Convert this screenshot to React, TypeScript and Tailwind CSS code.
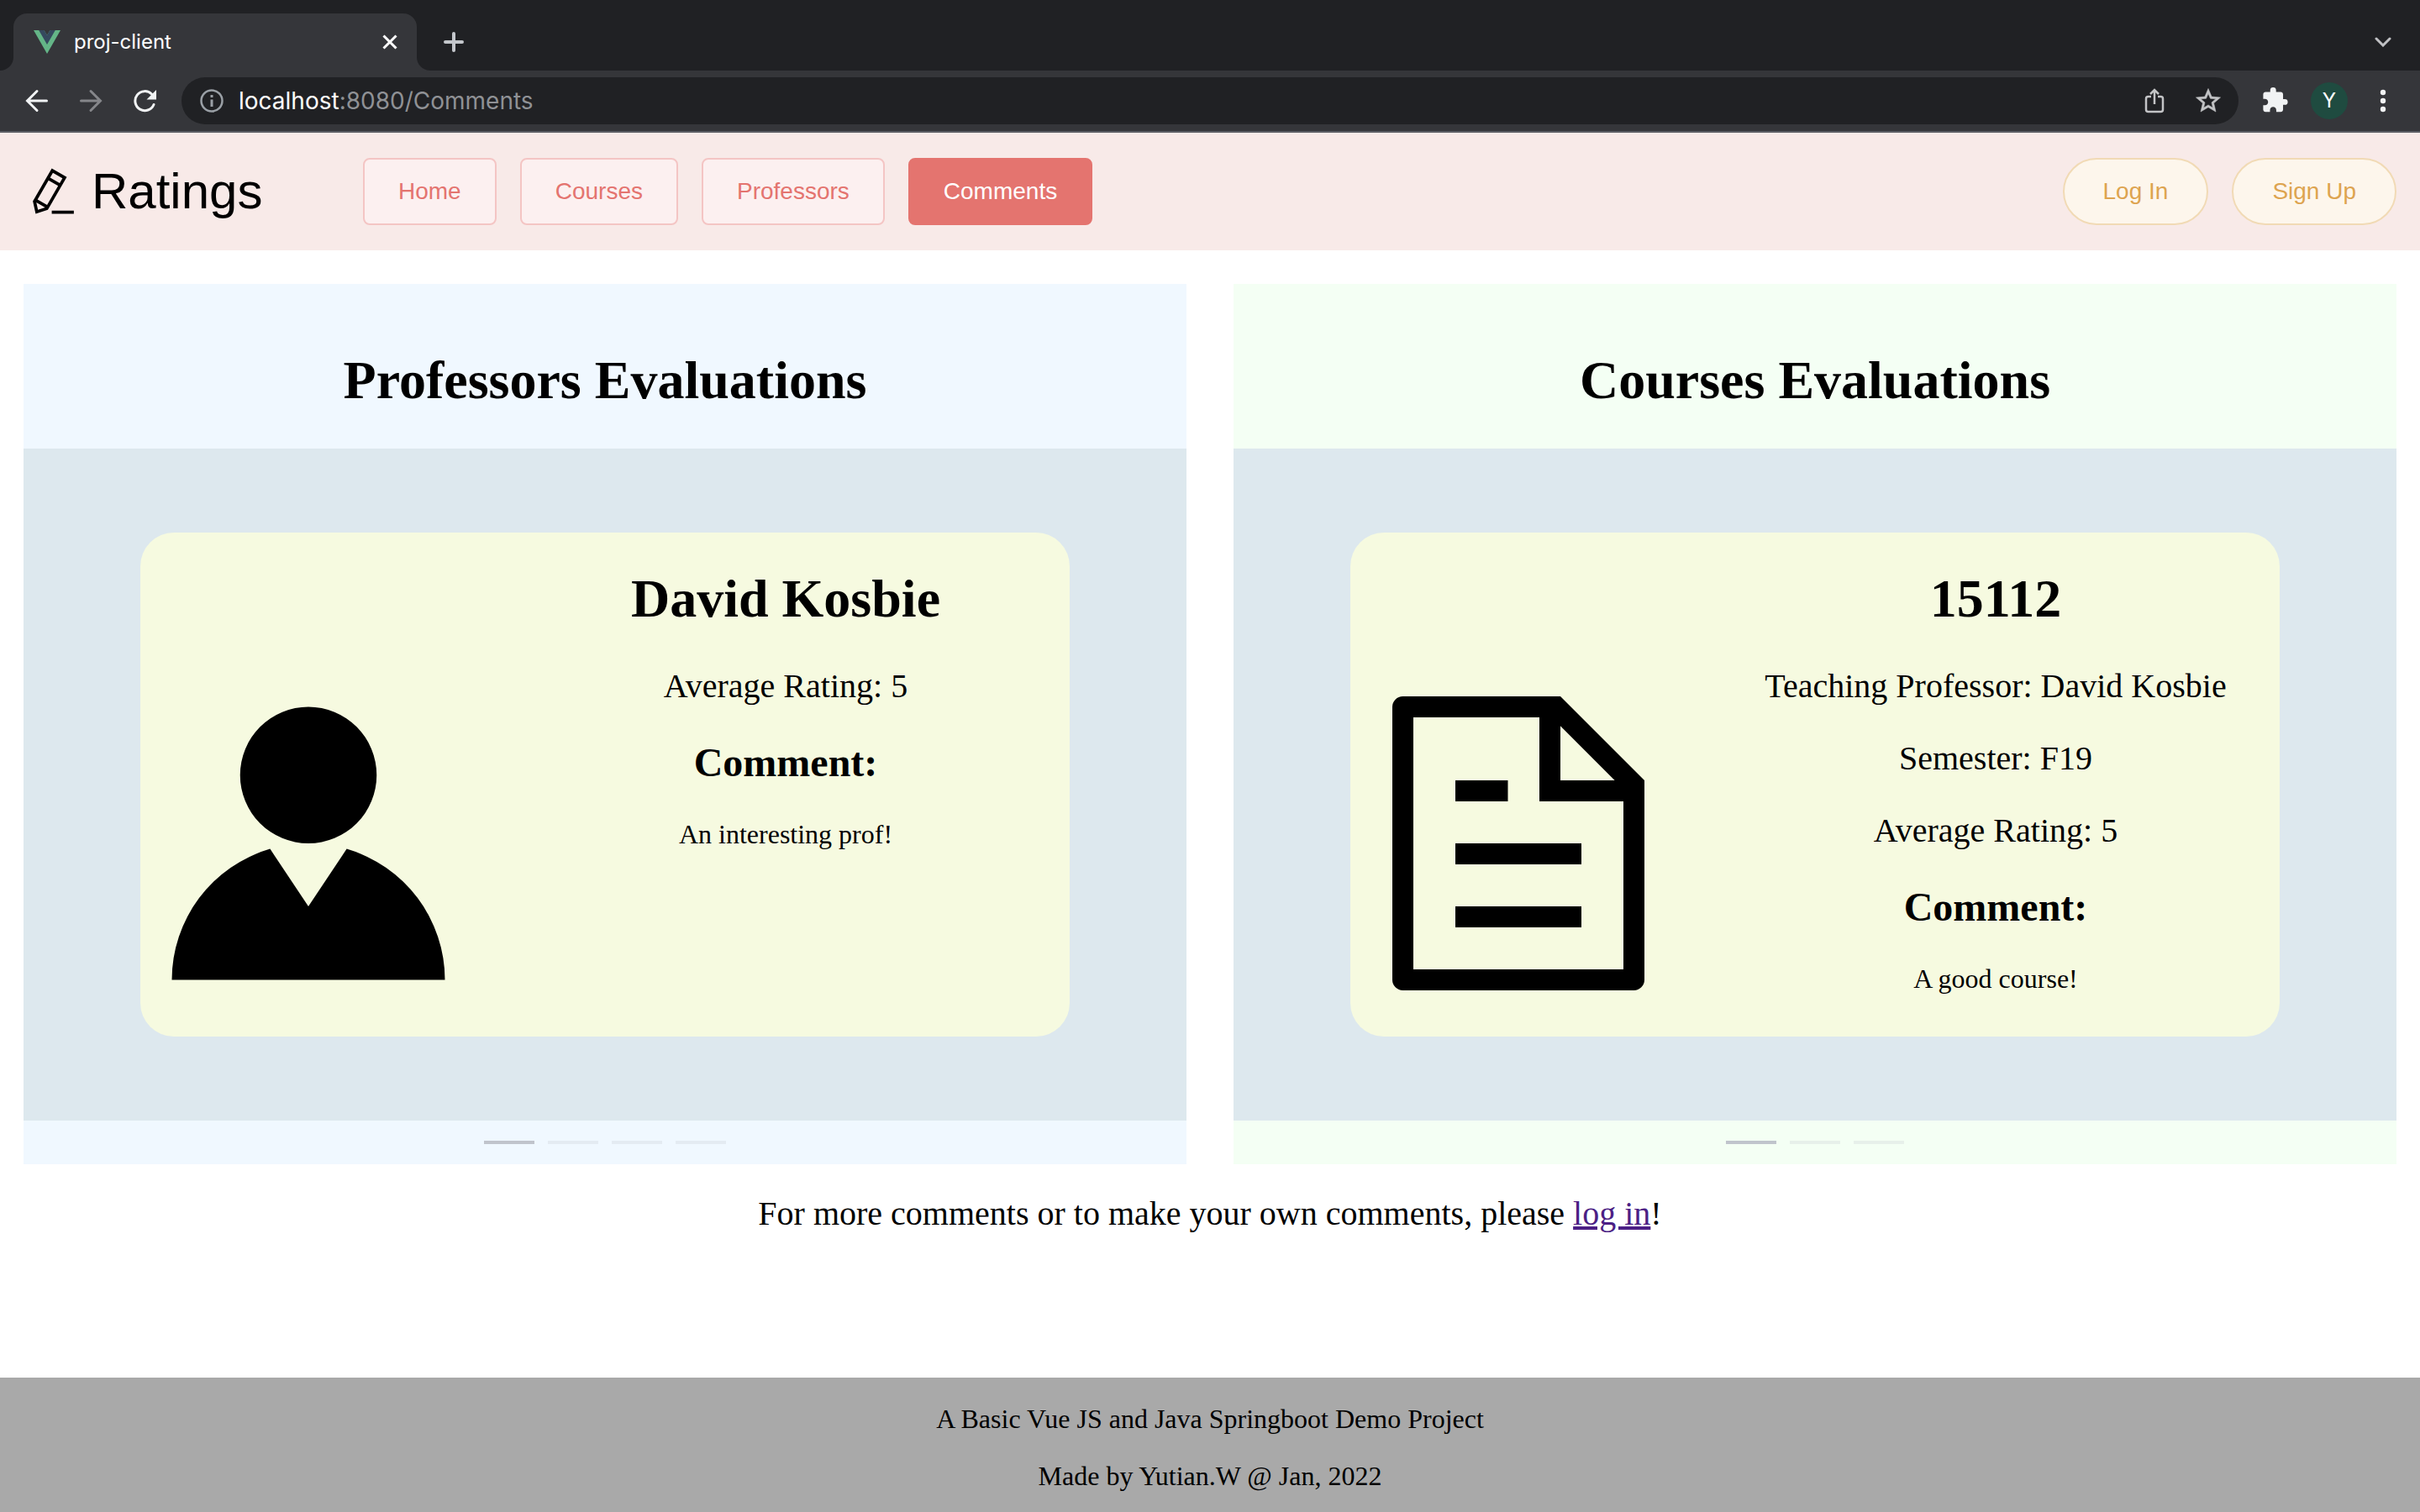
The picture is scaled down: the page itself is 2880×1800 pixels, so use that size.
import React from "react";

const serif = "font-['Liberation_Serif',serif]";

type Slide = {
  name: string;
  details: string[];
  comment: string;
};

function ChromeBar() {
  return (
    <div className="font-[Inter,sans-serif]">
      <div className="flex h-[84px] items-end bg-[#202124] pr-[30px] pl-[16px]">
        <div className="relative flex h-[68px] w-[480px] items-center rounded-t-[16px] bg-[#35363a] pr-[16px] pl-[24px] text-white">
          <svg className="absolute bottom-0 -left-[16px] size-[16px]" viewBox="0 0 16 16" aria-hidden="true">
            <path d="M16 0v16H0A16 16 0 0 0 16 0z" fill="#35363a" />
          </svg>
          <svg className="absolute -right-[16px] bottom-0 size-[16px]" viewBox="0 0 16 16" aria-hidden="true">
            <path d="M0 0v16h16A16 16 0 0 1 0 0z" fill="#35363a" />
          </svg>
          <svg className="size-[32px]" viewBox="0 0 32 32" aria-hidden="true">
            <path d="M0 2h12.5L16 8l3.500-6H32L16 30z" fill="#64b587" />
            <path d="M6.200 2h6.300L16 8l3.500-6h6.300L16 19z" fill="#35495e" />
          </svg>
          <span className="ml-[16px] grow text-[24px]">proj-client</span>
          <button aria-label="Close tab" className="flex size-[32px] items-center justify-center">
            <svg className="size-[18px]" viewBox="0 0 18 18" stroke="#fff" strokeWidth="3" aria-hidden="true">
              <path d="M1.500 1.500l15 15M16.500 1.500l-15 15" />
            </svg>
          </button>
        </div>
        <button aria-label="New tab" className="mb-[18px] ml-[28px] flex size-[32px] items-center justify-center">
          <svg className="size-[24px]" viewBox="0 0 24 24" stroke="#c4c7cc" strokeWidth="4" strokeLinecap="round" aria-hidden="true">
            <path d="M12 2v20M2 12h20" />
          </svg>
        </button>
        <button aria-label="Search tabs" className="mb-[18px] ml-auto flex h-[32px] w-[28px] items-center justify-center">
          <svg className="h-[12px] w-[20px]" viewBox="0 0 20 12" fill="none" stroke="#c0c1c4" strokeWidth="3" strokeLinecap="round" aria-hidden="true">
            <path d="M2 2l8 8 8-8" />
          </svg>
        </button>
      </div>
      <div className="flex h-[74px] items-center border-b-2 border-[#5c5e64] bg-[#35363a] pr-[36px] pl-[28px]">
        <button aria-label="Back" className="flex size-[32px] items-center justify-center">
          <svg className="size-[28px]" viewBox="0 0 28 28" fill="none" stroke="#f1f3f4" strokeWidth="3" strokeLinecap="round" aria-hidden="true">
            <path d="M25.500 14H3M14 2.500L2.500 14 14 25.500" />
          </svg>
        </button>
        <button aria-label="Forward" className="ml-[32px] flex size-[32px] items-center justify-center">
          <svg className="size-[28px]" viewBox="0 0 28 28" fill="none" stroke="#85868a" strokeWidth="3" strokeLinecap="round" aria-hidden="true">
            <path d="M2.500 14H25M14 2.500L25.500 14 14 25.500" />
          </svg>
        </button>
        <button aria-label="Reload" className="ml-[32px] flex size-[32px] items-center justify-center">
          <svg className="size-[28px]" viewBox="0 0 28 28" aria-hidden="true">
            <path d="M22.500 6A11.500 11.500 0 1 0 25 18.500" fill="none" stroke="#f1f3f4" strokeWidth="3" strokeLinecap="round" />
            <path d="M28 1v11.500H16.500z" fill="#f1f3f4" />
          </svg>
        </button>
        <div className="ml-[28px] flex h-[56px] grow items-center rounded-full bg-[#202124] pr-[20px] pl-[22px]">
          <svg className="size-[28px]" viewBox="0 0 28 28" fill="none" stroke="#9aa0a6" aria-hidden="true">
            <circle cx="14" cy="14" r="12.500" strokeWidth="2.500" />
            <path d="M14 12.500v8.500M14 7v3" strokeWidth="3" />
          </svg>
          <div className="ml-[18px] grow text-[28px] text-[#8f9195]">
            <span className="text-white">localhost</span>:8080/Comments
          </div>
          <button aria-label="Share">
            <svg className="h-[30px] w-[24px]" viewBox="0 0 24 30" fill="none" stroke="#c3c4c6" strokeWidth="2.500" aria-hidden="true">
              <path d="M8 10H4.500A2.500 2.500 0 0 0 2 12.500v13A2.500 2.500 0 0 0 4.500 28h15a2.500 2.500 0 0 0 2.500-2.500v-13A2.500 2.500 0 0 0 19.500 10H16M12 19V2.500M7 7l5-5 5 5" />
            </svg>
          </button>
          <button aria-label="Bookmark" className="ml-[36px]">
            <svg className="size-[32px]" viewBox="1 1 22 22" fill="#c3c4c6" stroke="#c3c4c6" strokeWidth="0.4" aria-hidden="true">
              <path d="M22 9.240l-7.190-.62L12 2 9.190 8.630 2 9.240l5.460 4.730L5.820 21 12 17.270 18.180 21l-1.630-7.030L22 9.240zM12 15.400l-3.760 2.270 1-4.280-3.320-2.880 4.380-.38L12 6.100l1.710 4.040 4.380.38-3.320 2.880 1 4.280L12 15.400z" />
            </svg>
          </button>
        </div>
        <button aria-label="Extensions" className="ml-[28px]">
          <svg className="size-[32px]" viewBox="1 1 23 23" fill="#f1f3f4" aria-hidden="true">
            <path d="M20.500 11H19V7c0-1.100-.9-2-2-2h-4V3.500a2.500 2.500 0 0 0-5 0V5H4c-1.100 0-1.990.9-1.990 2v3.800H3.500c1.490 0 2.700 1.210 2.700 2.700s-1.210 2.700-2.700 2.700H2V20c0 1.100.9 2 2 2h3.800v-1.500c0-1.490 1.210-2.700 2.700-2.700s2.700 1.210 2.700 2.700V22H17c1.100 0 2-.9 2-2v-4h1.500a2.500 2.500 0 0 0 0-5z" />
          </svg>
        </button>
        <button aria-label="Profile" className="ml-[26px] size-[44px] rounded-full bg-[#1f4b40] text-center text-[24px] leading-[44px] text-white">
          Y
        </button>
        <button aria-label="Menu" className="ml-[34px] flex h-[32px] w-[16px] items-center justify-center">
          <svg className="h-[28px] w-[8px]" viewBox="0 0 8 28" fill="#f1f3f4" aria-hidden="true">
            <circle cx="4" cy="4" r="3.200" />
            <circle cx="4" cy="14" r="3.200" />
            <circle cx="4" cy="24" r="3.200" />
          </svg>
        </button>
      </div>
    </div>
  );
}

const navItems = ["Home", "Courses", "Professors", "Comments"];

function Header() {
  return (
    <header className="flex h-[140px] items-center bg-[#f8eae8] px-[28px] font-['Liberation_Sans',sans-serif] text-[28px]">
      <div className="flex w-[404px] items-center pl-[5px] text-[60px] leading-[70px] text-black">
        <svg className="size-[60px]" viewBox="0 0 1024 1024" aria-hidden="true">
          <path d="m199.040 672.640 193.984 112 224-387.968-193.920-112-224 388.032zm-23.872 60.160 32.896 148.288 144.896-45.696L175.168 732.800zM455.040 229.248l193.920 112 56.704-98.112-193.984-112-56.640 98.112zM104.320 708.800l384-665.024 304.768 175.936L409.152 884.800h.064l-248.448 78.336L104.320 708.800zm384 254.272v-64h448v64h-448z" />
        </svg>
        <span className="ml-[16px]">Ratings</span>
      </div>
      <nav className="flex gap-[28px]">
        {navItems.map((item) => (
          <button
            key={item}
            className={
              item === "Comments"
                ? "h-[80px] rounded-[8px] border-2 border-[#e4746f] bg-[#e4746f] px-[40px] text-white"
                : "h-[80px] rounded-[8px] border-2 border-[#f4c5c4] bg-[#fcf0f0] px-[40px] text-[#e4746f]"
            }
          >
            {item}
          </button>
        ))}
      </nav>
      <div className="ml-auto flex gap-[28px] text-[#dda450]">
        <button className="h-[80px] rounded-full border-2 border-[#f1dab5] bg-[#fdf6ec] px-[46px]">Log In</button>
        <button className="h-[80px] rounded-full border-2 border-[#f1dab5] bg-[#fdf6ec] px-[46px]">Sign Up</button>
      </div>
    </header>
  );
}

function PersonIcon() {
  return (
    <svg className="size-[400px]" viewBox="0 0 1024 1024" aria-hidden="true">
      <path d="M628.736 528.896A416 416 0 0 1 928 928H96a415.872 415.872 0 0 1 299.264-399.104L512 704l116.736-175.104zM720 304a208 208 0 1 1-416 0 208 208 0 0 1 416 0z" />
    </svg>
  );
}

function DocumentIcon() {
  return (
    <svg className="size-[400px]" viewBox="0 0 1024 1024" aria-hidden="true">
      <path d="M832 384H576V128H192v768h640V384zm-26.496-64L640 154.496V320h165.504zM160 64h480l256 256v608a32 32 0 0 1-32 32H160a32 32 0 0 1-32-32V96a32 32 0 0 1 32-32zm160 448h384v64H320v-64zm0-192h160v64H320v-64zm0 384h384v64H320v-64z" />
    </svg>
  );
}

function Evaluations({
  title,
  tint,
  icon,
  slide,
  count,
}: {
  title: string;
  tint: string;
  icon: React.ReactNode;
  slide: Slide;
  count: number;
}) {
  return (
    <section className={"min-w-0 flex-1 " + tint}>
      <h1 className="pt-[78px] pb-[44px] text-center text-[64px] leading-[74px] font-bold">{title}</h1>
      <div className="flex h-[800px] items-center bg-[#dde8ee] px-[139px]">
        <article className="flex h-[600px] w-full rounded-[40px] bg-[#f6fae0]">
          <div className="flex w-[430px] shrink-0 items-end pb-[30px]">{icon}</div>
          <div className="grow pt-[42px] text-center">
            <h2 className="text-[64px] leading-[74px] font-bold">{slide.name}</h2>
            <div className="mt-[44px] flex flex-col gap-[40px] text-[40px] leading-[46px]">
              {slide.details.map((d) => (
                <p key={d}>{d}</p>
              ))}
            </div>
            <h3 className="mt-[40px] text-[48px] leading-[56px] font-bold">Comment:</h3>
            <p className="mt-[39px] text-[32px] leading-[36px]">{slide.comment}</p>
          </div>
        </article>
      </div>
      <div className="flex h-[52px] items-center justify-center gap-[16px]">
        {Array.from({ length: count }, (_, i) => (
          <button
            key={i}
            aria-label={"Slide " + (i + 1)}
            className={i === 0 ? "h-[4px] w-[60px] bg-[#c0c4cc]" : "h-[4px] w-[60px] bg-[#c0c4cc]/25"}
          />
        ))}
      </div>
    </section>
  );
}

export default function App() {
  return (
    <div className={"flex min-h-screen flex-col bg-white text-black " + serif}>
      <ChromeBar />
      <Header />
      <main className="grow px-[28px] pt-[40px]">
        <div className="flex gap-[56px]">
          <Evaluations
            title="Professors Evaluations"
            tint="bg-[#f0f8ff]"
            icon={<PersonIcon />}
            slide={{ name: "David Kosbie", details: ["Average Rating: 5"], comment: "An interesting prof!" }}
            count={4}
          />
          <Evaluations
            title="Courses Evaluations"
            tint="bg-[#f4fff4]"
            icon={<DocumentIcon />}
            slide={{
              name: "15112",
              details: ["Teaching Professor: David Kosbie", "Semester: F19", "Average Rating: 5"],
              comment: "A good course!",
            }}
            count={3}
          />
        </div>
        <p className="mt-[36px] text-center text-[40px] leading-[46px]">
          For more comments or to make your own comments, please{" "}
          <a href="#login" className="text-[#4c1f85] underline">
            log in
          </a>
          !
        </p>
      </main>
      <footer className="flex h-[160px] flex-col gap-[32px] bg-[#a9a9a9] pt-[31px] text-center text-[32px] leading-[36px]">
        <p>A Basic Vue JS and Java Springboot Demo Project</p>
        <p>Made by Yutian.W @ Jan, 2022</p>
      </footer>
    </div>
  );
}
